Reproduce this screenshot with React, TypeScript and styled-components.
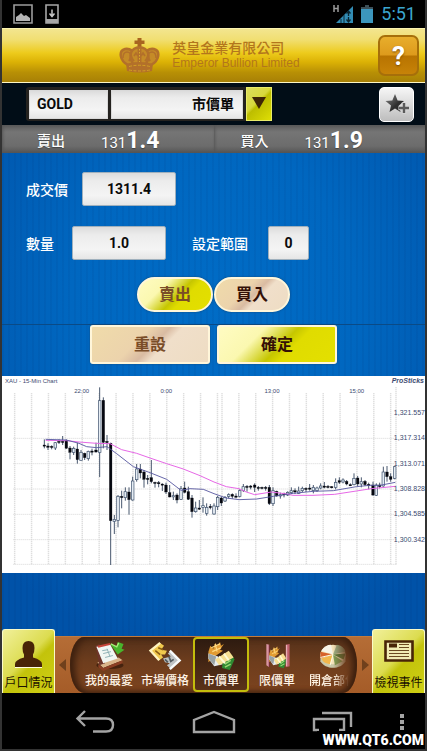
import React, { useState } from "react";
import styled, { createGlobalStyle, css } from "styled-components";

const GlobalStyle = createGlobalStyle`
  * { box-sizing: border-box; }
  body {
    margin: 0;
    background: #333333;
    font-family: Roboto, "Noto Sans CJK TC", sans-serif;
  }
  button, input, select { font-family: inherit; margin: 0; }
  button { cursor: pointer; }
`;

const Screen = styled.div`
  display: flex;
  flex-direction: column;
  min-height: 100vh;
  padding: 0 2px 2px;
`;

/* ---------- device status bar ---------- */

const StatusBar = styled.div`
  display: flex;
  align-items: center;
  height: 28px;
  padding: 0 9px 0 11px;
  background: #000;
`;

const StatusGroup = styled.div<{ $end?: boolean }>`
  display: flex;
  align-items: center;
  gap: ${(p) => (p.$end ? 8 : 12)}px;
  margin-left: ${(p) => (p.$end ? "auto" : 0)};
`;

const Clock = styled.time`
  color: #3ba6cf;
  font-size: 18px;
  line-height: 28px;
`;

/* ---------- brand header ---------- */

const Header = styled.header`
  display: grid;
  grid-template-columns: 1fr auto 1fr;
  align-items: center;
  height: 55px;
  padding: 0 6px;
  border-top: 1px solid #fbf3b0;
  border-bottom: 1px solid #fdf6c4;
  background: linear-gradient(#f3e58f 0%, #f1df72 20%, #edcb1c 45%, #dcb205 62%, #b89005 82%, #a78006 100%);
`;

const Brand = styled.div`
  grid-column: 2;
  display: flex;
  align-items: center;
  gap: 12px;
  padding-right: 8px;
  color: #b3761c;
`;

const BrandName = styled.div`
  display: flex;
  flex-direction: column;
  font-size: 14px;
  font-weight: 500;
  line-height: 15px;
  white-space: nowrap;
`;

const BrandLatin = styled.span`
  font-family: "Liberation Sans", Arial, sans-serif;
  font-size: 12px;
  font-weight: 400;
  line-height: 14px;
`;

const HelpButton = styled.button`
  grid-column: 3;
  justify-self: end;
  width: 41px;
  height: 41px;
  padding: 0;
  border: 2px solid #a66f0a;
  border-radius: 7px;
  background: linear-gradient(#e8ae2c 0%, #dd9a1c 49%, #b87300 51%, #c78308 100%);
  color: #fff;
  font-size: 26px;
  font-weight: 700;
  line-height: 36px;
  text-shadow: 0 1px 2px #7a4a00;
`;

/* ---------- instrument toolbar ---------- */

const Toolbar = styled.div`
  display: flex;
  align-items: center;
  height: 42px;
  padding: 0 11px 0 24px;
  background: #010d17;
`;

const PickerFrame = styled.div`
  display: flex;
  align-items: center;
  gap: 3px;
  height: 34px;
  padding: 2px 3px;
  border-radius: 3px 0 0 3px;
  background: #24221f;
`;

const fieldLook = css`
  border: 1px solid #d9d9d9;
  background: linear-gradient(#dcdcdc, #ececec 25%, #f4f4f4 70%, #e6e6e6);
  color: #0a0a0a;
  font-size: 14px;
  font-weight: 700;
`;

const SymbolInput = styled.input`
  ${fieldLook}
  width: 79px;
  height: 29px;
  padding: 0 7px;
`;

const OrderSelect = styled.select`
  ${fieldLook}
  appearance: none;
  width: 132px;
  height: 29px;
  padding: 0 8px 0 0;
  border-radius: 0;
  text-align-last: right;
`;

const DropButton = styled.button`
  width: 26px;
  height: 34px;
  padding: 0;
  border: 1px solid #e9ec6a;
  background: linear-gradient(135deg, #dddd5e 0%, #d8d83c 42%, #bdbd00 50%, #dede05 100%);
`;

const StarButton = styled.button`
  display: flex;
  align-items: center;
  justify-content: center;
  width: 35px;
  height: 35px;
  margin-left: auto;
  padding: 0;
  border: 1px solid #fff;
  border-radius: 5px;
  background: linear-gradient(#f6f6f6, #dadada 50%, #bdbdbd);
`;

/* ---------- quote strip ---------- */

const Quotes = styled.div`
  display: grid;
  grid-template-columns: 1fr 1fr;
`;

const Quote = styled.div<{ $inset: number }>`
  display: flex;
  align-items: flex-start;
  gap: 36px;
  height: 28px;
  padding: 4px 0 0 ${(p) => p.$inset}px;
  background: linear-gradient(#5b5b5b, #757575 25%, #6c6c6c 75%, #555);
  box-shadow: inset 1px 0 3px #555;
  color: #fff;
  font-size: 14px;
  font-weight: 500;
  line-height: 24px;
  text-shadow: 0 1px 1px #444;
`;

const QuotePrice = styled.span`
  display: flex;
  align-items: baseline;
  font-size: 15px;
  font-weight: 400;
`;

const QuotePips = styled.strong`
  font-size: 23px;
  font-weight: 700;
`;

/* ---------- order form ---------- */

const Body = styled.main`
  display: flex;
  flex: 1;
  flex-direction: column;
  background:
    repeating-linear-gradient(90deg, rgba(0, 30, 90, 0.06) 0 2px, transparent 2px 6px),
    radial-gradient(ellipse 75% 65% at 50% 28%, #006cc6 0%, #0067c0 45%, #0052a8 100%);
`;

const OrderForm = styled.form`
  display: flex;
  flex-direction: column;
  padding: 19px 0 12px;
`;

const FieldRow = styled.div<{ $gap: number }>`
  display: flex;
  align-items: center;
  gap: ${(p) => p.$gap}px;
  height: 34px;
  padding-left: 24px;

  & + & { margin-top: 20px; }
`;

const FieldLabel = styled.label<{ $apart?: boolean }>`
  margin: ${(p) => (p.$apart ? "0 2px 0 8px" : "0")};
  color: #fff;
  font-size: 14px;
  font-weight: 500;
  white-space: nowrap;
`;

const NumberInput = styled.input<{ $width: number }>`
  ${fieldLook}
  width: ${(p) => p.$width}px;
  height: 34px;
  padding: 0;
  border: 1px solid #9fb0bd;
  border-radius: 2px;
  text-align: center;
`;

const ButtonRow = styled.div<{ $gap: number; $ruled?: boolean }>`
  display: flex;
  justify-content: center;
  gap: ${(p) => p.$gap}px;
  margin-top: ${(p) => (p.$ruled ? 12 : 17)}px;
  border-top: ${(p) => (p.$ruled ? "1px solid #0a4a86" : "0")};
`;

const faces = {
  lime: "linear-gradient(135deg, #fffcc4 0%, #fbf8b0 32%, #c6c600 53%, #e0dc00 62%, #e4e000 100%)",
  sand: "linear-gradient(135deg, #f0dcaa 0%, #ecd3ac 40%, #d9bba2 52%, #f0dfca 60%, #eedcc2 100%)",
};

const FormButton = styled.button<{ $face: keyof typeof faces; $pill?: boolean; $dim?: boolean }>`
  width: ${(p) => (p.$pill ? 76 : 120)}px;
  height: ${(p) => (p.$pill ? 35 : 39)}px;
  padding: 0;
  border: 2px solid #fff6da;
  border-radius: ${(p) => (p.$pill ? 18 : 3)}px;
  background: ${(p) => faces[p.$face]};
  background-origin: border-box;
  box-shadow: 0 0 2px #17446e;
  color: ${(p) => (p.$dim ? "#7a4d28" : "#341006")};
  font-size: 16px;
  font-weight: 700;
  line-height: 30px;
`;

/* ---------- chart ---------- */

const ChartFigure = styled.figure`
  margin: 0;
  background: #fff;
  line-height: 0;

  svg { display: block; width: 100%; height: auto; }
  text { font-family: "Liberation Sans", Arial, sans-serif; fill: #3c4a70; }
`;

/* ---------- bottom navigation ---------- */

const Dock = styled.nav`
  display: flex;
  align-items: flex-end;
  height: 64px;
  margin-top: auto;
`;

const DockTab = styled.button`
  display: flex;
  flex: none;
  flex-direction: column;
  align-items: center;
  justify-content: flex-end;
  gap: 7px;
  width: 53px;
  height: 64px;
  padding: 0 0 1px;
  border: 1px solid #fbfbc8;
  border-bottom: 0;
  border-radius: 3px 3px 0 0;
  background: linear-gradient(135deg, #f1f09a 0%, #dcdc50 45%, #c3c30b 56%, #cfcf14 100%);
  color: #1c1200;
  font-size: 12px;
  line-height: 17px;
  white-space: nowrap;
`;

const Strip = styled.div`
  display: flex;
  flex: 1;
  min-width: 0;
  align-items: center;
  justify-content: space-between;
  height: 57px;
  padding: 0 3px;
  border-top: 1px solid #c27a3c;
  background: linear-gradient(#b56d36, #a55c28);
`;

const Carousel = styled.div`
  display: flex;
  flex: 1;
  min-width: 0;
  height: 56px;
  margin: 0 4px;
  padding-left: 11px;
  overflow: hidden;
  border-radius: 14px / 50%;
  background: linear-gradient(#53301a, #6e3d1d 45%, #7d441f);
  box-shadow: inset 5px 0 6px #3d200f, inset -5px 0 6px #3d200f;
`;

const CarouselItem = styled.button<{ $active?: boolean; $faded?: boolean }>`
  display: flex;
  flex: none;
  flex-direction: column;
  align-items: center;
  gap: 1px;
  width: 56px;
  height: 55px;
  padding: 1px 0 0;
  border: 2px solid ${(p) => (p.$active ? "#c3bd0c" : "transparent")};
  border-radius: 4px;
  background: ${(p) => (p.$active ? "linear-gradient(#2e1b10, #5b3219)" : "none")};
  color: #fff4e6;
  font-size: 12px;
  font-weight: 500;
  line-height: 18px;
  white-space: nowrap;
  ${(p) =>
    p.$faded &&
    css`
      mask-image: linear-gradient(90deg, #000 50%, transparent 78%);
    `}
`;

const PageArrow = styled.button`
  width: 8px;
  height: 20px;
  padding: 0;
  border: 0;
  background: none;
  line-height: 0;
`;

const SystemBar = styled.footer`
  position: relative;
  height: 56px;
  background: #000;
`;

const SystemKeys = styled.div`
  display: flex;
  align-items: center;
  gap: 45px;
  height: 58px;
  padding: 0 20px 0 73px;
`;

const MainKeys = styled.div`
  display: flex;
  flex: 1;
  align-items: center;
  justify-content: space-between;
`;

const SystemKey = styled.button`
  padding: 0;
  border: 0;
  background: none;
  line-height: 0;
`;

const Watermark = styled.div`
  position: absolute;
  right: 0;
  bottom: 0;
  padding: 0 1px 0 5px;
  background: #000;
  color: #fff;
  font-size: 14px;
  font-weight: 900;
  line-height: 18px;
`;

/* ---------- drawings ---------- */

const Crown = () => (
  <svg width="41" height="36" viewBox="0 0 41 36" fill="none" stroke="#b3702a" aria-hidden="true">
    <path d="M18.500 0h4v2.500h3v3.500h-3v3h-4V6h-3V2.500h3z" fill="#a86420" stroke="none" />
    <path d="M9 27C1 23-1 13 6 11q7-1 10 6l-1 9zM32 27c8-4 10-14 3-16q-7-1-10 6l1 9z" fill="#c58b27" strokeWidth="2.500" />
    <path d="M14 26C9 17 12 9.500 20.500 9.500S32 17 27 26z" fill="#c58b27" strokeWidth="2.500" />
    <path d="M20.500 10v15" strokeWidth="4" />
    <path d="M20.500 11v13" stroke="#d8a92a" strokeWidth="1" strokeDasharray="1.500 1.500" />
    <path d="M4 20q0-6 4-6t5 6M37 20q0-6-4-6t-5 6" strokeWidth="1.500" />
    <path d="M10 23l2-4 3 4M26 23l3-4 2 4M15 18l2-3 2 3M22 18l2-3 2 3" strokeWidth="1.800" />
    <path d="M7 26q13.500-4 27 0l-1 7q-12.500 3-25 0z" fill="#b3702a" stroke="none" />
    <path d="M10 28.500q10.500-2.500 21 0M10 32q10.500 2 21 0" stroke="#d3a024" strokeDasharray="3 1.500" />
  </svg>
);

const PictureIcon = () => (
  <svg width="20" height="20" viewBox="0 0 20 20" aria-hidden="true">
    <path d="M1 1h18v18H1z" fill="none" stroke="#9c9c9c" strokeWidth="1.600" />
    <path d="M3 17v-4l3-2 2-2 3 3 2-1 4 3v3z" fill="#b4b4b4" />
  </svg>
);

const DownloadIcon = () => (
  <svg width="14" height="20" viewBox="0 0 14 20" aria-hidden="true">
    <path d="M1 1h12v18H1z" fill="none" stroke="#a6a6a6" strokeWidth="1.600" />
    <path d="M1 15h12v4H1z" fill="#a6a6a6" />
    <path d="M7 5.500v6M4.500 9.500L7 12.500l2.500-3" fill="none" stroke="#c6c6c6" strokeWidth="1.500" />
  </svg>
);

const SignalIcon = () => (
  <svg width="20" height="20" viewBox="0 0 20 20" aria-hidden="true">
    <path d="M1 1v7M5 1v7M1 4.500h4" stroke="#9a9a9a" strokeWidth="1.500" />
    <path d="M3 19L20 2v17z" fill="#328cb4" />
    <path d="M8 15v4M11 11v8" stroke="#0a2c3b" />
    <path d="M15.500 7v5m-2-2.500l2-2.500 2 2.500M15.500 18v-5m-2 2.500l2 2.500 2-2.500" fill="none" stroke="#092531" strokeWidth="1.300" />
  </svg>
);

const BatteryIcon = () => (
  <svg width="12" height="20" viewBox="0 0 12 20" aria-hidden="true">
    <path d="M4 1h4v2h4v16H0V3h4z" fill="#3c96bd" />
    <path d="M4 1h4v2h4v2H0V3h4z" fill="#3d4f57" />
  </svg>
);

const StarPlus = () => (
  <svg width="26" height="24" viewBox="0 0 26 24" aria-hidden="true">
    <defs>
      <linearGradient id="star" x1="0" y1="0" x2="1" y2="1">
        <stop offset="0" stopColor="#8a8a8a" />
        <stop offset="0.600" stopColor="#2e2e2e" />
      </linearGradient>
    </defs>
    <path d="M11 2l2.600 6.400L20 9l-5 4.400L16.500 20 11 16.500 5.500 20 7 13.400 1.500 9l6.800-.6z" fill="url(#star)" />
    <path d="M20 10.500v11M14.500 16h11" stroke="#d9d9d9" strokeWidth="4.500" />
    <path d="M20 11v10M15 16h10" stroke="#5a5a5a" strokeWidth="2.400" />
  </svg>
);

const DownTriangle = () => (
  <svg width="14" height="12" viewBox="0 0 14 12" aria-hidden="true">
    <path d="M0 0h14L7 12z" fill="#3f2506" />
  </svg>
);

const PersonIcon = () => (
  <svg width="27" height="27" viewBox="0 0 27 27" aria-hidden="true">
    <path d="M0 26v-3q0-4 9-6.500v-3Q7.500 11 7.500 7 7.500 0 13.500 0t6 7q0 4-1.500 6.500v3q9 2.500 9 6.500v3z" fill="#482407" />
    <path d="M0 26.500h27" stroke="#fffde0" />
  </svg>
);

const NewsIcon = () => (
  <svg width="30" height="28" viewBox="0 0 30 28" aria-hidden="true">
    <path d="M1.500 1.500h27v19h-27z" fill="#f0ebb4" stroke="#482407" strokeWidth="2.600" />
    <path d="M5 5.500h8" stroke="#482407" strokeWidth="4" />
    <path d="M15 4.500h10M15 7.500h10M5 10.500h20M5 13.500h20M5 16.500h20" stroke="#6b4a22" />
  </svg>
);

const BookIcon = () => (
  <svg width="32" height="32" viewBox="0 0 32 32" aria-hidden="true">
    <ellipse cx="17" cy="26" rx="14" ry="4" fill="#281306" opacity="0.600" />
    <path d="M4 23l22-5 4 3-20 8z" fill="#d9b48a" />
    <path d="M5 25l5 4 20-8v3l-20 8-5-4z" fill="#8b3f24" />
    <path d="M2 6l4-2 6 20-6 2z" fill="#6d352a" />
    <path d="M3 7l14-3 8 15-15 5z" fill="#f1f6f2" />
    <path d="M4 6l13-3 1 2L5 8z" fill="#c6453a" />
    <path d="M9 11l6-1M10 14l8-2M12 18l8-2M14 9l3 8" stroke="#8fb2b5" />
    <path d="M17 4l7 3 1-5 6 2-2 5 3 1-7 5-5-7z" fill="#49b42c" />
    <path d="M18 4l6 3 2-4" fill="none" stroke="#a2ee76" strokeWidth="1.500" />
  </svg>
);

const PriceIcon = () => (
  <svg width="34" height="32" viewBox="0 0 34 32" aria-hidden="true">
    <path d="M12 3L2 11l9 10 4-3-2-3h4l2-4-6-1 3-4z" fill="#f1c94d" />
    <path d="M12 3L2 11l9 10" fill="none" stroke="#fff4bf" strokeWidth="2.400" />
    <path d="M7 11l5 4M10 8l5 2" stroke="#8a5d12" strokeWidth="1.600" />
    <path d="M23 11l10 10-10 9-4-4 3-2-5-1-2-4 8-2-3-3z" fill="#bfc3c4" />
    <path d="M22 11l10 10-10 9" fill="none" stroke="#f7fafa" strokeWidth="2.600" />
    <path d="M17 20l3 3M21 17l2 5 3-2" fill="none" stroke="#555e62" strokeWidth="1.800" />
  </svg>
);

const MarketArt = () => (
  <>
    <path d="M3 12l2-6 3 3 2-6 2 3 3-4 1 4 3-2-4 6 3 1-7 5-8 7z" fill="#e19b32" />
    <path d="M6 8l9-4M7 12l9-4M10 4l2 8" stroke="#ffd980" strokeWidth="1.200" />
    <path d="M3 14l10 3 5 8-9 2-6-8z" fill="#e8ecee" />
    <path d="M3 14l8 3-2 9-6-7z" fill="#98a2a5" />
    <path d="M18 22l9-7 3 5-5 11-8-2z" fill="#2f8a32" />
    <path d="M20 25l6-4M20 28l6-3" stroke="#9bd772" strokeWidth="1.500" />
    <path d="M10 20l14-9 5 7-15 8z" fill="#f7df91" />
    <path d="M14 17l6 7M19 14l5 7" stroke="#fffbd4" strokeWidth="2" />
  </>
);

const MarketIcon = () => (
  <svg width="32" height="32" viewBox="0 0 32 32" aria-hidden="true">
    <MarketArt />
  </svg>
);

const LimitIcon = () => (
  <svg width="32" height="32" viewBox="0 0 32 32" aria-hidden="true">
    <path d="M5 4l3 1v23l-3-2z" fill="#d995a3" />
    <path d="M8 5v23" stroke="#70222e" />
    <g transform="translate(6 5) scale(0.680 0.780)">
      <MarketArt />
    </g>
    <path d="M25 5l4-1v23l-4 1z" fill="#c0606d" />
    <path d="M26 5v22" stroke="#f0c4ca" />
  </svg>
);

const PositionIcon = () => (
  <svg width="32" height="32" viewBox="0 0 32 32" aria-hidden="true">
    <path d="M3 15v7c5 9 21 9 26 0v-8z" fill="#c9c8a9" />
    <ellipse cx="16" cy="15" rx="13" ry="10" fill="#f3e3bb" />
    <path d="M16 15L4 11Q8 5 14 5z" fill="#f6f3e8" />
    <path d="M16 15L3 19V12z" fill="#d7612b" />
    <path d="M16 15l-3 10Q6 24 4 19z" fill="#f1b64b" />
    <path d="M16 15l4-10q7 1 9 7z" fill="#9fb389" />
    <path d="M16 15l13-1-2 6z" fill="#56813c" />
    <path d="M16 15l10 7-8 4z" fill="#7fa258" />
    <path d="M16 15L3 18M16 15l-3 11" stroke="#fffbe3" />
  </svg>
);

const Caret = ({ flip }: { flip?: boolean }) => (
  <svg width="7" height="12" viewBox="0 0 7 12" aria-hidden="true">
    <path d={flip ? "M0 0l7 6-7 6z" : "M7 0L0 6l7 6z"} fill="#70401c" />
  </svg>
);

const BackIcon = () => (
  <svg width="41" height="24" viewBox="0 0 41 24" fill="none" stroke="#a4a4a4" strokeWidth="2.400" aria-hidden="true">
    <path d="M10 1L2.500 8.500 10 16M3 8.500h28q7 0 7 6.500t-7 6.500H18" />
  </svg>
);

const HomeIcon = () => (
  <svg width="44" height="24" viewBox="0 0 44 24" fill="none" stroke="#a4a4a4" strokeWidth="2.400" aria-hidden="true">
    <path d="M2 22V10l20-8 20 8v12z" />
  </svg>
);

const RecentIcon = () => (
  <svg width="42" height="24" viewBox="0 0 42 24" fill="none" stroke="#a4a4a4" strokeWidth="2.400" aria-hidden="true">
    <path d="M10 3h29v14M7 20H2V9h30v11h-5" />
  </svg>
);

const MenuIcon = () => (
  <svg width="6" height="18" viewBox="0 0 6 18" fill="#a4a4a4" aria-hidden="true">
    <path d="M1 1h4v4H1zM1 7h4v4H1zM1 13h4v4H1z" />
  </svg>
);

/* ---------- price chart data, in thirds of a chart unit ---------- */

type Candle = [x: number, high: number, top: number, bottom: number, low: number, filled: 0 | 1];

const candles: Candle[] = [
  [133, 208, 225, 227, 235, 1], [144, 220, 228, 232, 240, 1], [155, 226, 229, 231, 238, 1], [166, 216, 218, 234, 240, 0],
  [177, 208, 214, 217, 222, 1], [188, 198, 214, 217, 225, 1], [199, 208, 211, 235, 236, 1], [210, 228, 234, 247, 268, 1],
  [221, 230, 235, 247, 255, 0], [232, 218, 237, 269, 281, 1], [243, 240, 247, 271, 271, 0], [254, 248, 250, 263, 270, 1],
  [265, 242, 244, 266, 272, 0], [276, 236, 243, 246, 256, 1], [288, 218, 240, 246, 248, 1], [299, 52, 92, 247, 321, 0],
  [310, 82, 91, 217, 235, 1], [321, 195, 214, 218, 240, 1], [332, 218, 220, 452, 585, 1], [343, 435, 448, 454, 492, 0],
  [354, 375, 379, 451, 472, 0], [365, 362, 379, 383, 415, 1], [376, 352, 365, 383, 392, 0], [387, 352, 366, 389, 434, 1],
  [398, 320, 333, 390, 392, 0], [410, 282, 297, 329, 335, 0], [421, 282, 297, 309, 325, 1], [432, 300, 306, 328, 353, 1],
  [443, 315, 325, 328, 343, 1], [454, 270, 323, 335, 340, 1], [465, 335, 337, 339, 353, 1], [476, 333, 338, 340, 352, 1],
  [487, 340, 342, 345, 363, 1], [498, 338, 345, 366, 372, 1], [509, 345, 368, 381, 382, 1], [520, 365, 377, 380, 390, 0],
  [531, 370, 375, 390, 400, 1], [543, 348, 356, 388, 390, 0], [554, 335, 354, 367, 370, 1], [565, 350, 365, 388, 390, 1],
  [576, 375, 384, 425, 443, 1], [587, 395, 414, 425, 428, 0], [598, 390, 414, 416, 420, 1], [609, 382, 407, 412, 428, 0],
  [620, 400, 412, 430, 437, 0], [631, 402, 409, 413, 418, 1], [642, 400, 408, 432, 434, 0], [653, 378, 382, 410, 420, 0],
  [664, 380, 384, 399, 408, 1], [675, 378, 382, 393, 396, 0], [686, 370, 374, 379, 385, 0], [697, 370, 373, 379, 386, 1],
  [708, 370, 378, 380, 385, 1], [719, 358, 362, 379, 382, 0], [730, 342, 350, 362, 366, 0], [741, 345, 349, 352, 365, 1],
  [752, 345, 348, 350, 358, 1], [764, 340, 345, 352, 366, 1], [775, 348, 352, 354, 362, 1], [786, 350, 352, 354, 358, 1],
  [797, 348, 352, 355, 362, 1], [808, 345, 352, 401, 405, 1], [819, 352, 362, 401, 408, 0], [830, 362, 364, 378, 380, 1],
  [841, 368, 374, 378, 386, 0], [852, 368, 371, 375, 382, 1], [863, 364, 367, 375, 378, 0], [874, 352, 362, 368, 372, 0],
  [885, 355, 362, 366, 372, 1], [896, 350, 363, 370, 372, 0], [907, 350, 355, 362, 366, 0], [918, 352, 355, 358, 366, 1],
  [929, 342, 354, 356, 362, 1], [940, 345, 352, 362, 370, 0], [951, 350, 354, 362, 366, 0], [962, 340, 348, 354, 358, 0],
  [973, 336, 348, 352, 355, 1], [984, 345, 349, 352, 355, 1], [995, 348, 350, 353, 355, 1], [1007, 325, 337, 352, 358, 0],
  [1018, 322, 332, 337, 342, 1], [1029, 325, 330, 336, 340, 0], [1040, 330, 334, 342, 346, 1], [1051, 340, 344, 346, 348, 1],
  [1062, 310, 325, 344, 346, 0], [1073, 318, 324, 342, 348, 1], [1084, 322, 335, 342, 352, 0], [1095, 330, 334, 344, 348, 1],
  [1106, 338, 343, 347, 358, 1], [1119, 335, 345, 375, 378, 1], [1129, 340, 345, 376, 378, 0], [1139, 338, 345, 350, 355, 1],
  [1150, 290, 306, 348, 350, 0], [1161, 288, 306, 320, 335, 1], [1172, 310, 320, 328, 335, 1], [1184, 288, 290, 325, 328, 0],
];

const slowAverage: [number, number][] = [
  [137, 211], [199, 212], [237, 216], [290, 220], [330, 221], [365, 239], [410, 250], [450, 264], [500, 281], [550, 297],
  [600, 317], [642, 336], [679, 350], [717, 356], [739, 366], [764, 374], [789, 370], [814, 366], [854, 371], [879, 376],
  [939, 376], [1004, 373], [1069, 363], [1114, 356], [1186, 349],
];

const fastAverage: [number, number][] = [
  [137, 208], [199, 210], [237, 220], [260, 230], [290, 233], [321, 230], [350, 251], [400, 290], [450, 308], [500, 328],
  [543, 361], [570, 356], [610, 358], [642, 371], [679, 384], [717, 389], [770, 387], [820, 379], [880, 370], [939, 364],
  [1000, 362], [1069, 350], [1110, 346], [1140, 346], [1186, 337],
];

const cx = (v: number) => v / 3 - 2;
const cy = (v: number) => v / 3 - 6;
const line = (pts: [number, number][]) => pts.map(([x, y]) => `${cx(x)},${cy(y)}`).join(" ");

const verticals = [
  ...Array.from({ length: 13 }, (_, i) => 44 + i * 50.7),
  ...Array.from({ length: 11 }, (_, i) => 666 + i * 50.6),
  1188,
];
const horizontals = [205, 281, 357, 433, 509, 583];
const times: [number, string][] = [[245, "22:00"], [499, "0:00"], [816, "13:00"], [1070, "15:00"]];
const levels: [number, string][] = [
  [128, "1,321.557"], [205, "1,317.314"], [281, "1,313.071"], [357, "1,308.828"], [433, "1,304.585"], [509, "1,300.342"],
];

const PriceChart = () => (
  <ChartFigure>
    <svg viewBox="0 0 423 197" role="img" aria-label="XAU 15-Min Chart">
      {verticals.map((v) => (
        <line key={v} x1={cx(v)} x2={cx(v)} y1={cy(v === 1188 ? 52 : 70)} y2={cy(583)} stroke="#d4d4d4" strokeWidth="1.500" strokeDasharray="1 1" />
      ))}
      {horizontals.map((v) => (
        <line key={v} x1={cx(40)} x2={cx(1190)} y1={cy(v)} y2={cy(v)} stroke="#d6d6d6" strokeDasharray="1 1" />
      ))}
      {candles.map(([x, high, top, bottom, low, filled]) => (
        <g key={x}>
          <line x1={cx(x)} x2={cx(x)} y1={cy(high)} y2={cy(low)} stroke="#34455f" strokeWidth="0.900" />
          <rect
            x={cx(x) - 1.3}
            y={cy(top)}
            width={2.6}
            height={Math.max(1.2, (bottom - top) / 3)}
            fill={filled ? "#05070f" : "#e6edf4"}
            stroke={filled ? "#05070f" : "#40536e"}
            strokeWidth={filled ? 0.3 : 0.7}
          />
        </g>
      ))}
      <polyline points={line(slowAverage)} fill="none" stroke="#e668e6" />
      <polyline points={line(fastAverage)} fill="none" stroke="#56569f" strokeWidth="0.900" />
      <text x="3" y="7" fontSize="6">XAU - 15-Min Chart</text>
      <text x="422" y="7" fontSize="7" fontWeight="700" fontStyle="italic" textAnchor="end">ProSticks</text>
      {times.map(([x, t]) => (
        <text key={t} x={cx(x)} y="17" fontSize="6" textAnchor="middle">{t}</text>
      ))}
      {levels.map(([y, t]) => (
        <text key={t} x="423" y={cy(y) + 2} fontSize="7" textAnchor="end">{t}</text>
      ))}
    </svg>
  </ChartFigure>
);

const menu = [
  { label: "我的最愛", Icon: BookIcon },
  { label: "市場價格", Icon: PriceIcon },
  { label: "市價單", Icon: MarketIcon },
  { label: "限價單", Icon: LimitIcon },
  { label: "開倉部位", Icon: PositionIcon },
];

export default function App() {
  const [symbol, setSymbol] = useState("GOLD");
  const [active, setActive] = useState("市價單");

  return (
    <>
      <GlobalStyle />
      <Screen>
        <StatusBar>
          <StatusGroup>
            <PictureIcon />
            <DownloadIcon />
          </StatusGroup>
          <StatusGroup $end>
            <SignalIcon />
            <BatteryIcon />
            <Clock>5:51</Clock>
          </StatusGroup>
        </StatusBar>

        <Header>
          <Brand>
            <Crown />
            <BrandName>
              英皇金業有限公司
              <BrandLatin>Emperor Bullion Limited</BrandLatin>
            </BrandName>
          </Brand>
          <HelpButton type="button">?</HelpButton>
        </Header>

        <Toolbar>
          <PickerFrame>
            <SymbolInput aria-label="代號" value={symbol} onChange={(e) => setSymbol(e.target.value)} />
            <OrderSelect aria-label="單類" value={active === "限價單" ? active : "市價單"} onChange={(e) => setActive(e.target.value)}>
              <option>市價單</option>
              <option>限價單</option>
            </OrderSelect>
          </PickerFrame>
          <DropButton type="button" aria-label="選擇單類">
            <DownTriangle />
          </DropButton>
          <StarButton type="button" aria-label="加入最愛">
            <StarPlus />
          </StarButton>
        </Toolbar>

        <Quotes>
          <Quote $inset={35}>
            賣出
            <QuotePrice>131<QuotePips>1.4</QuotePips></QuotePrice>
          </Quote>
          <Quote $inset={27}>
            買入
            <QuotePrice>131<QuotePips>1.9</QuotePips></QuotePrice>
          </Quote>
        </Quotes>

        <Body>
          <OrderForm onSubmit={(e) => e.preventDefault()}>
            <FieldRow $gap={14}>
              <FieldLabel htmlFor="price">成交價</FieldLabel>
              <NumberInput id="price" $width={94} defaultValue="1311.4" />
            </FieldRow>
            <FieldRow $gap={18}>
              <FieldLabel htmlFor="amount">數量</FieldLabel>
              <NumberInput id="amount" $width={94} defaultValue="1.0" />
              <FieldLabel htmlFor="range" $apart>設定範圍</FieldLabel>
              <NumberInput id="range" $width={41} defaultValue="0" />
            </FieldRow>
            <ButtonRow $gap={1}>
              <FormButton type="button" $face="lime" $pill $dim>賣出</FormButton>
              <FormButton type="button" $face="sand" $pill>買入</FormButton>
            </ButtonRow>
            <ButtonRow $gap={7} $ruled>
              <FormButton type="reset" $face="sand" $dim>重設</FormButton>
              <FormButton type="submit" $face="lime">確定</FormButton>
            </ButtonRow>
          </OrderForm>

          <PriceChart />

          <Dock>
            <DockTab type="button">
              <PersonIcon />
              戶口情況
            </DockTab>
            <Strip>
              <PageArrow type="button" aria-label="上一頁"><Caret /></PageArrow>
              <Carousel>
                {menu.map(({ label, Icon }, i) => (
                  <CarouselItem
                    key={label}
                    type="button"
                    $active={label === active}
                    $faded={i === menu.length - 1}
                    onClick={() => setActive(label)}
                  >
                    <Icon />
                    {label}
                  </CarouselItem>
                ))}
              </Carousel>
              <PageArrow type="button" aria-label="下一頁"><Caret flip /></PageArrow>
            </Strip>
            <DockTab type="button">
              <NewsIcon />
              檢視事件
            </DockTab>
          </Dock>
        </Body>

        <SystemBar>
          <SystemKeys>
            <MainKeys>
              <SystemKey type="button" aria-label="返回"><BackIcon /></SystemKey>
              <SystemKey type="button" aria-label="主畫面"><HomeIcon /></SystemKey>
              <SystemKey type="button" aria-label="最近使用"><RecentIcon /></SystemKey>
            </MainKeys>
            <SystemKey type="button" aria-label="選單"><MenuIcon /></SystemKey>
          </SystemKeys>
          <Watermark>WWW.QT6.COM</Watermark>
        </SystemBar>
      </Screen>
    </>
  );
}
